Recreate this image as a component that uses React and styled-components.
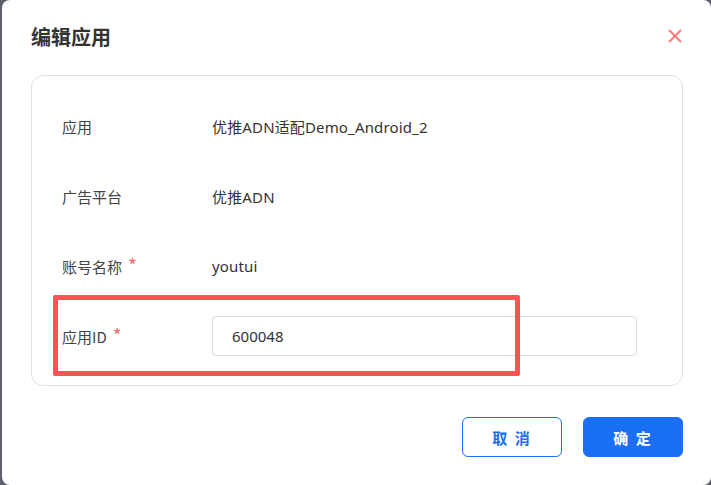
import styled, { createGlobalStyle } from 'styled-components'

const GlobalStyle = createGlobalStyle`
  html, body {
    margin: 0;
    padding: 0;
    background: #5d6169;
  }
  body {
    font-family: "Noto Sans", "Noto Sans CJK SC", sans-serif;
    color: #333;
  }
`

const rows = [
  { label: '应用', value: '优推ADN适配Demo_Android_2' },
  { label: '广告平台', value: '优推ADN' },
  { label: '账号名称', value: 'youtui', required: true },
  { label: '应用ID', value: '600048', required: true, input: true },
]

export default function App() {
  return (
    <>
      <GlobalStyle />
      <Modal>
        <Header>
          <Title>编辑应用</Title>
          <Close aria-label='close'>
            <svg width='14' height='14' viewBox='0 0 14 14'>
              <path d='M1 1L13 13M13 1L1 13' stroke='#ff7b7b' strokeWidth='2' />
            </svg>
          </Close>
        </Header>
        <Card>
          {rows.map((row) => (
            <Row key={row.label}>
              <Label>
                {row.label}
                {row.required && <Star>*</Star>}
              </Label>
              {row.input ? (
                <Input defaultValue={row.value} />
              ) : (
                <Value>{row.value}</Value>
              )}
            </Row>
          ))}
          <Highlight />
        </Card>
        <Footer>
          <Button>取 消</Button>
          <Button primary>确 定</Button>
        </Footer>
      </Modal>
    </>
  )
}

const Modal = styled.div`
  box-sizing: border-box;
  margin-left: 2px;
  width: 709px;
  height: 485px;
  background: #fff;
  border-radius: 8px;
  padding: 22px 28px 0 29px;
`

const Header = styled.div`
  display: flex;
  align-items: center;
  justify-content: space-between;
  height: 28px;
`

const Title = styled.h2`
  margin: 0;
  font-size: 20px;
  font-weight: 700;
  color: #333;
  font-family: "Noto Sans CJK SC", sans-serif;
`

const Close = styled.button`
  border: 0;
  background: none;
  padding: 0;
  margin-right: 1px;
  display: flex;
  cursor: pointer;
`

const Card = styled.div`
  position: relative;
  box-sizing: border-box;
  margin-top: 25px;
  height: 311px;
  border: 1px solid #e1e1e1;
  border-radius: 12px;
  padding: 15px 45px 0 30px;
`

const Row = styled.div`
  display: flex;
  align-items: center;
  height: 70px;
`

const Label = styled.div`
  display: flex;
  align-items: center;
  width: 150px;
  font-size: 15px;
  color: #444;
  font-family: "Noto Sans CJK SC", sans-serif;
`

const Star = styled.span`
  color: #f56c6c;
  font-size: 19px;
  line-height: 1;
  margin: -4px 0 0 6px;
`

const Value = styled.div`
  font-size: 15px;
  letter-spacing: 0.15px;
  color: #333;
`

const Input = styled.input`
  box-sizing: border-box;
  flex: 1;
  height: 40px;
  border: 1px solid #dcdcdc;
  border-radius: 4px;
  padding: 0 19px;
  font-size: 15px;
  color: #333;
  font-family: "Noto Sans", sans-serif;
  outline: none;
`

const Highlight = styled.div`
  position: absolute;
  left: 21px;
  top: 219px;
  width: 467px;
  height: 81px;
  box-sizing: border-box;
  border: 5px solid #ff5353;
  border-radius: 2px;
  pointer-events: none;
`

const Footer = styled.div`
  display: flex;
  justify-content: flex-end;
  gap: 21px;
  margin-top: 31px;
`

const Button = styled.button`
  box-sizing: border-box;
  width: 100px;
  height: 40px;
  border-radius: 6px;
  border: 1px solid #1a6ff5;
  background: ${(p) => (p.primary ? '#1a6ff5' : '#fff')};
  color: ${(p) => (p.primary ? '#fff' : '#1a6ff5')};
  font-size: 15px;
  font-weight: 700;
  font-family: "Noto Sans CJK SC", sans-serif;
  letter-spacing: 2px;
  cursor: pointer;
`
